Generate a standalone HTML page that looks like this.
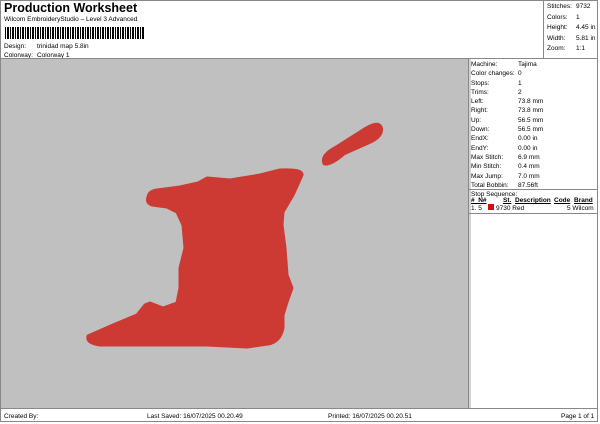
<!DOCTYPE html>
<html><head><meta charset="utf-8"><style>
body{margin:0;width:600px;height:424px;background:#fff;font-family:"Liberation Sans",sans-serif;color:#000;position:relative;overflow:hidden}
div,span{position:absolute}
.s{font-size:6.5px;line-height:9.6px;white-space:nowrap}
</style></head><body>
<div style="left:4px;top:1px;font-size:12.5px;font-weight:bold">Production Worksheet</div>
<div class="s" style="left:4px;top:15px">Wilcom EmbroideryStudio – Level 3 Advanced</div>
<div style="left:5px;top:27px;width:140px;height:12px;background:repeating-linear-gradient(90deg,#000 0 1px,#fff 1px 2px,#000 2px 3px,#000 3px 4px,#fff 4px 5px)"></div>
<div class="s" style="left:4px;top:42px">Design:</div><div class="s" style="left:37px;top:42px">trinidad map 5.8in</div>
<div class="s" style="left:4px;top:51px">Colorway:</div><div class="s" style="left:37px;top:51px">Colorway 1</div>
<div style="left:0;top:0;width:598px;height:422px;border:1px solid #888;box-sizing:border-box"></div>
<div style="left:543px;top:0;width:1px;height:59px;background:#888"></div>
<div class="s" style="left:547px;top:2px;line-height:10.6px">Stitches:<br>Colors:<br>Height:<br>Width:<br>Zoom:</div>
<div class="s" style="left:576px;top:2px;line-height:10.6px">9732<br>1<br>4.45 in<br>5.81 in<br>1:1</div>
<div style="left:0;top:58px;width:598px;height:1px;background:#888"></div>
<div style="left:1px;top:59px;width:467px;height:349px;background:#c0c0c0"></div>
<div style="left:468px;top:59px;width:3px;height:349px;background:#d4d4d4"></div>
<div style="left:468px;top:59px;width:1px;height:349px;background:#888"></div>
<svg style="position:absolute;left:0;top:0" width="600" height="424">
<path fill="#cc3a33" stroke="#cc3a33" stroke-width="3" stroke-linejoin="round" d="M148,197 Q149,191 157,190 L180,187 L198,183 L207,178 L230,180 L260,175 L280,170 Q303,169 302,175 L298,184 L293,195 L283,212 L282,225 L285,248 L287,275 L292,288 L287,302 L283,315 L283,328 Q280,342 268,344 L247,347 L207,345 L163,345 L130,345 L100,345 Q86,343 88,336 L113,325 L137,315 L145,305 L150,303 L163,308 L177,303 L180,288 L180,268 L185,248 L183,225 L177,212 L167,207 L152,205 Q146,203 148,197 Z"/>
<path fill="#cc3a33" d="M323,165 Q318,155 335,146 L365,127 Q380,118 383,128 Q384,137 372,143 L345,155 Q330,168 323,165Z"/>
</svg>
<div class="s" style="left:471px;top:60px;line-height:9.3px">Machine:<br>Color changes:<br>Stops:<br>Trims:<br>Left:<br>Right:<br>Up:<br>Down:<br>EndX:<br>EndY:<br>Max Stitch:<br>Min Stitch:<br>Max Jump:<br>Total Bobbin:</div>
<div class="s" style="left:518px;top:60px;line-height:9.3px">Tajima<br>0<br>1<br>2<br>73.8 mm<br>73.8 mm<br>56.5 mm<br>56.5 mm<br>0.00 in<br>0.00 in<br>6.9 mm<br>0.4 mm<br>7.0 mm<br>87.56ft</div>
<div style="left:469px;top:189px;width:129px;height:1px;background:#888"></div>
<div class="s" style="left:471px;top:190px">Stop Sequence:</div>
<div class="s" style="left:471px;top:196px;font-weight:bold;text-decoration:underline">#&nbsp; N#</div>
<div class="s" style="left:503px;top:196px;font-weight:bold;text-decoration:underline">St.</div>
<div class="s" style="left:515px;top:196px;font-weight:bold;text-decoration:underline">Description</div>
<div class="s" style="left:554px;top:196px;font-weight:bold;text-decoration:underline">Code</div>
<div class="s" style="left:574px;top:196px;font-weight:bold;text-decoration:underline">Brand</div>
<div class="s" style="left:471px;top:204px">1. 5</div>
<div style="left:488px;top:204px;width:6px;height:6px;background:#d01010"></div>
<div class="s" style="left:496px;top:204px">9730 Red</div>
<div class="s" style="left:567px;top:204px">5 Wilcom</div>
<div style="left:469px;top:213px;width:129px;height:1px;background:#888"></div>
<div style="left:0;top:408px;width:598px;height:1px;background:#888"></div>
<div class="s" style="left:4px;top:412px">Created By:</div>
<div class="s" style="left:147px;top:412px">Last Saved: 16/07/2025 00.20.49</div>
<div class="s" style="left:328px;top:412px">Printed: 16/07/2025 00.20.51</div>
<div class="s" style="left:561px;top:412px">Page 1 of 1</div>
</body></html>
